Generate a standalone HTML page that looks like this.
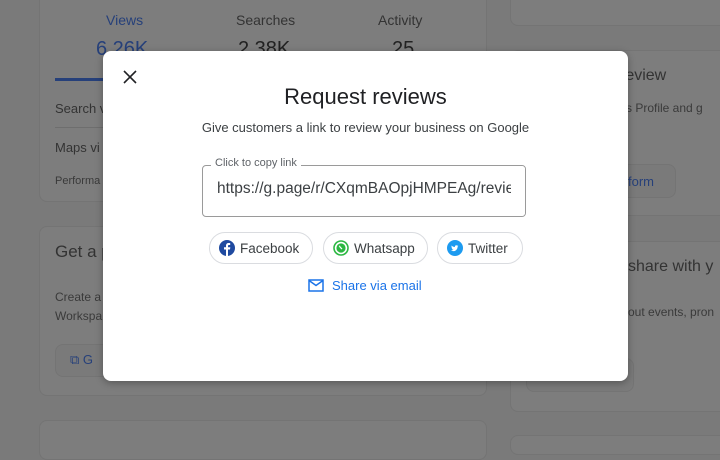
<!DOCTYPE html>
<html><head><style>
*{margin:0;padding:0;box-sizing:border-box}
body{width:720px;height:439px;overflow:hidden;background:#7a7a7a;font-family:"Liberation Sans",Arial,sans-serif;position:relative;color:#333}
.card{position:absolute;background:#7d7d7d;border:1px solid #747474;border-radius:8px}
.t{position:absolute;white-space:nowrap}
.modal{position:absolute;left:103px;top:51px;width:525px;height:330px;background:#fff;border-radius:8px;box-shadow:0 2px 8px rgba(0,0,0,.3)}
.btn{position:absolute;top:181px;height:32px;border:1px solid #dadce0;border-radius:16px;font-size:13.5px;color:#3c4043;display:flex;align-items:center;padding-left:9px}
.btn svg{margin-right:5px}
</style></head><body>
<div class="card" style="left:39px;top:-10px;width:448px;height:212px"></div>
<div class="card" style="left:39px;top:226px;width:448px;height:170px"></div>
<div class="card" style="left:39px;top:420px;width:448px;height:40px"></div>
<div class="card" style="left:510px;top:-10px;width:230px;height:36px"></div>
<div class="card" style="left:510px;top:50px;width:230px;height:166px"></div>
<div class="card" style="left:510px;top:241px;width:230px;height:171px"></div>
<div class="card" style="left:510px;top:435px;width:230px;height:20px"></div>
<div class="t" style="left:106px;top:12px;font-size:14px;color:#26407a">Views</div>
<div class="t" style="left:236px;top:12px;font-size:14px;color:#333">Searches</div>
<div class="t" style="left:378px;top:12px;font-size:14px;color:#333">Activity</div>
<div class="t" style="left:96px;top:38px;font-size:20px;color:#26407a">6.26K</div>
<div class="t" style="left:238px;top:38px;font-size:20px;color:#222">2.38K</div>
<div class="t" style="left:392px;top:38px;font-size:20px;color:#222">25</div>
<div style="position:absolute;left:55px;top:78px;width:60px;height:3px;background:#26407a"></div>
<div class="t" style="left:55px;top:101px;font-size:13px">Search v</div>
<div style="position:absolute;left:55px;top:127px;width:60px;height:1px;background:#6e6e6e"></div>
<div class="t" style="left:55px;top:140px;font-size:13px">Maps vi</div>
<div class="t" style="left:55px;top:175px;font-size:11px;color:#3a3a3a">Performa</div>
<div class="t" style="left:55px;top:242px;font-size:17px">Get a p</div>
<div class="t" style="left:55px;top:290px;font-size:12px;color:#3a3a3a">Create a</div>
<div class="t" style="left:55px;top:309px;font-size:12px;color:#3a3a3a">Workspa</div>
<div class="card" style="left:55px;top:344px;width:60px;height:33px;background:#7a7a7a"></div>
<div class="t" style="left:70px;top:352px;font-size:13px;color:#26407a">⧉ G</div>
<div class="t" style="left:620px;top:67px;font-size:16px">review</div>
<div class="t" style="left:620px;top:101px;font-size:12px;color:#3a3a3a">ss Profile and g</div>
<div class="card" style="left:600px;top:164px;width:76px;height:34px;background:#7a7a7a"></div>
<div class="t" style="left:628px;top:174px;font-size:13px;color:#26407a">form</div>
<div class="t" style="left:628px;top:258px;font-size:16px">share with y</div>
<div class="t" style="left:628px;top:305px;font-size:12px;color:#3a3a3a">out events, pron</div>
<div class="card" style="left:526px;top:358px;width:108px;height:34px;background:#7a7a7a"></div>

<div class="modal">
<svg style="position:absolute;left:20px;top:19px" width="14" height="14" viewBox="0 0 14 14"><path d="M1 1L13 13M13 1L1 13" stroke="#202124" stroke-width="1.6"/></svg>
<div class="t" style="left:0;width:525px;text-align:center;top:33px;font-size:22px;color:#202124">Request reviews</div>
<div class="t" style="left:0;width:525px;text-align:center;top:69px;font-size:13px;color:#3c4043">Give customers a link to review your business on Google</div>
<div style="position:absolute;left:99px;top:114px;width:324px;height:52px;border:1px solid #9a9a9a;border-radius:4px;overflow:hidden">
<div class="t" style="left:14px;top:14px;font-size:15.5px;color:#3c4043">https://g.page/r/CXqmBAOpjHMPEAg/review</div>
<div style="position:absolute;right:0;top:0;width:14px;height:50px;background:#fff"></div>
</div>
<div class="t" style="left:108px;top:106px;font-size:11px;color:#5f6368;background:#fff;padding:0 4px">Click to copy link</div>
<div class="btn" style="left:106px;width:104px"><svg width="16" height="16" viewBox="0 0 16 16"><circle cx="8" cy="8" r="8" fill="#1f4aa0"/><path d="M9 16V9.5h2l.3-2.2H9V6c0-.6.2-1 1-1h1.2V3.1C11 3 10.3 3 9.7 3 8 3 7 4 7 5.8v1.5H5v2.2h2V16z" fill="#fff"/></svg>Facebook</div>
<div class="btn" style="left:220px;width:105px"><svg width="16" height="16" viewBox="0 0 16 16"><circle cx="8" cy="8" r="7" fill="#fff" stroke="#2bb741" stroke-width="1.6"/><circle cx="8" cy="8" r="4.6" fill="#2bb741"/><path d="M6.3 5.8c.4.9 1.1 2.2 2.8 3.2" stroke="#fff" stroke-width="1.2" fill="none"/></svg>Whatsapp</div>
<div class="btn" style="left:334px;width:86px"><svg width="16" height="16" viewBox="0 0 16 16"><circle cx="8" cy="8" r="8" fill="#1d9bf0"/><path d="M4 10.5c1.5.9 3.6.9 5-.3 1.2-1 1.7-2.4 1.6-3.6l.8-.7-.9.2.7-.8-1 .3c-.8-.8-2.3-.4-2.3 1v.4C6.6 7 5.4 6.4 4.6 5.5c-.4.8 0 1.6.5 2l-.6-.1c0 .7.5 1.2 1.1 1.4h-.6c.2.6.7 1 1.4 1-.7.5-1.5.7-2.4.7z" fill="#fff"/></svg>Twitter</div>
<svg style="position:absolute;left:205px;top:228px" width="16" height="13" viewBox="0 0 16 13"><rect x="1" y="1" width="14" height="11" fill="none" stroke="#1a73e8" stroke-width="1.5"/><path d="M1 1.5l7 5 7-5" fill="none" stroke="#1a73e8" stroke-width="1.5"/></svg>
<div class="t" style="left:229px;top:227px;font-size:13px;color:#1a73e8">Share via email</div>
</div>
</body></html>
